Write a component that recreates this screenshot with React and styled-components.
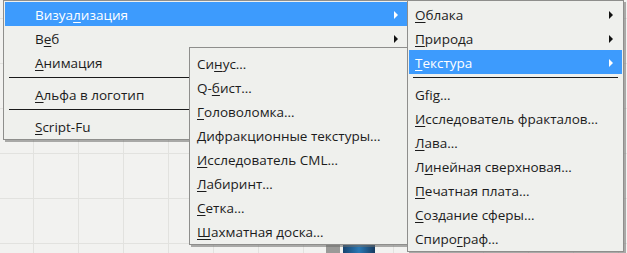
import React from "react";
import styled, { createGlobalStyle } from "styled-components";

const GlobalStyle = createGlobalStyle`
  html, body {
    margin: 0;
    padding: 0;
    background: #f2f2f0;
  }
  body {
    font-family: "Open Sans", "Noto Sans", "DejaVu Sans", sans-serif;
    font-size: 13.5px;
    color: #1c1c1c;
  }
`;

// canvas behind the popups, with the faint guide grid
const Desktop = styled.div`
  position: relative;
  width: 627px;
  height: 253px;
  overflow: hidden;
  background-color: #f2f2f0;
  background-image: linear-gradient(to right, #e2e2df 1px, transparent 1px),
    linear-gradient(to bottom, #e2e2df 1px, transparent 1px);
  background-size: 45px 45px;
  background-position: 33px 18px;
`;

const Thumb = styled.div`
  position: absolute;
  left: 326px;
  top: 244px;
  display: flex;
  gap: 3px;
  height: 12px;

  &::before {
    content: "";
    width: 14px;
    background: #9a9a98;
  }
  &::after {
    content: "";
    width: 32px;
    background: linear-gradient(to right, #17446f, #2a78b4, #163a60);
  }
`;

const Menu = styled.div`
  position: absolute;
  left: ${(p) => p.$left}px;
  top: ${(p) => p.$top}px;
  width: ${(p) => p.$width}px;
  z-index: ${(p) => p.$z};
  background: #eff0ed;
  border: 1px solid #8e8e8c;
  box-shadow: 2px 2px 0 rgba(110, 110, 108, 0.55);
  padding: ${(p) => p.$pad || "1px"};
  box-sizing: border-box;
  display: flex;
  flex-direction: column;
`;

const Row = styled.div`
  height: 24px;
  display: flex;
  align-items: center;
  justify-content: space-between;
  padding: 1px ${(p) => (p.$arrow ? 9 : 6)}px 0 ${(p) => p.$indent}px;
  box-sizing: border-box;
  white-space: nowrap;
  background: ${(p) => (p.$active ? "#3d9bfd" : "transparent")};
  color: ${(p) => (p.$active ? "#ffffff" : "#1c1c1c")};
`;

const Arrow = styled.span`
  width: 0;
  height: 0;
  border-top: 4px solid transparent;
  border-bottom: 4px solid transparent;
  border-left: 4px solid ${(p) => (p.$active ? "#ffffff" : "#111111")};
`;

const Separator = styled.div`
  height: 8px;
  display: flex;
  align-items: flex-start;
  padding: 3px 4px 0;
  box-sizing: border-box;

  &::before {
    content: "";
    flex: 1;
    height: 1px;
    background: #1a1a1a;
  }
`;

const U = styled.span`
  text-decoration: underline;
  text-underline-offset: 2px;
`;

// "_" marks the mnemonic letter
const Label = ({ text }) => {
  const parts = text.split("_");
  if (parts.length < 2) return <span>{text}</span>;
  return (
    <span>
      {parts[0]}
      <U>{parts[1][0]}</U>
      {parts[1].slice(1)}
    </span>
  );
};

const Item = ({ text, arrow, active, indent }) => (
  <Row $arrow={arrow} $active={active} $indent={indent}>
    <Label text={text} />
    {arrow && <Arrow $active={active} />}
  </Row>
);

const mainItems = [
  { text: "Визуа_лизация", arrow: true, active: true },
  { text: "В_еб", arrow: true },
  { text: "_Анимация", arrow: true },
  { sep: true },
  { text: "_Альфа в логотип", arrow: true },
  { sep: true },
  { text: "_Script-Fu", arrow: true },
];

const patternItems = [
  "Си_нус…",
  "Q-_бист…",
  "_Головоломка…",
  "_Дифракционные текстуры…",
  "_Исследователь CML…",
  "_Лабиринт…",
  "_Сетка…",
  "_Шахматная доска…",
];

const renderItems = [
  { text: "_Облака", arrow: true },
  { text: "_Природа", arrow: true },
  { text: "_Текстура", arrow: true, active: true },
  { sep: true },
  { text: "Gfig…" },
  { text: "_Исследователь фракталов…" },
  { text: "_Лава…" },
  { text: "Л_инейная сверхновая…" },
  { text: "_Печатная плата…" },
  { text: "_Создание сферы…" },
  { text: "Спиро_граф…" },
];

const renderList = (items, indent) =>
  items.map((it, i) =>
    it.sep ? (
      <Separator key={i} />
    ) : (
      <Item key={i} text={it.text} arrow={it.arrow} active={it.active} indent={indent} />
    )
  );

export default function App() {
  return (
    <>
      <GlobalStyle />
      <Desktop>
        <Thumb />
        <Menu $left={3} $top={0} $width={406} $z={1}>
          {renderList(mainItems, 30)}
        </Menu>
        <Menu $left={189} $top={47} $width={220} $z={2} $pad="3px 1px 1px">
          {renderList(
            patternItems.map((text) => ({ text })),
            6
          )}
        </Menu>
        <Menu $left={407} $top={0} $width={217} $z={3}>
          {renderList(renderItems, 6)}
        </Menu>
      </Desktop>
    </>
  );
}
